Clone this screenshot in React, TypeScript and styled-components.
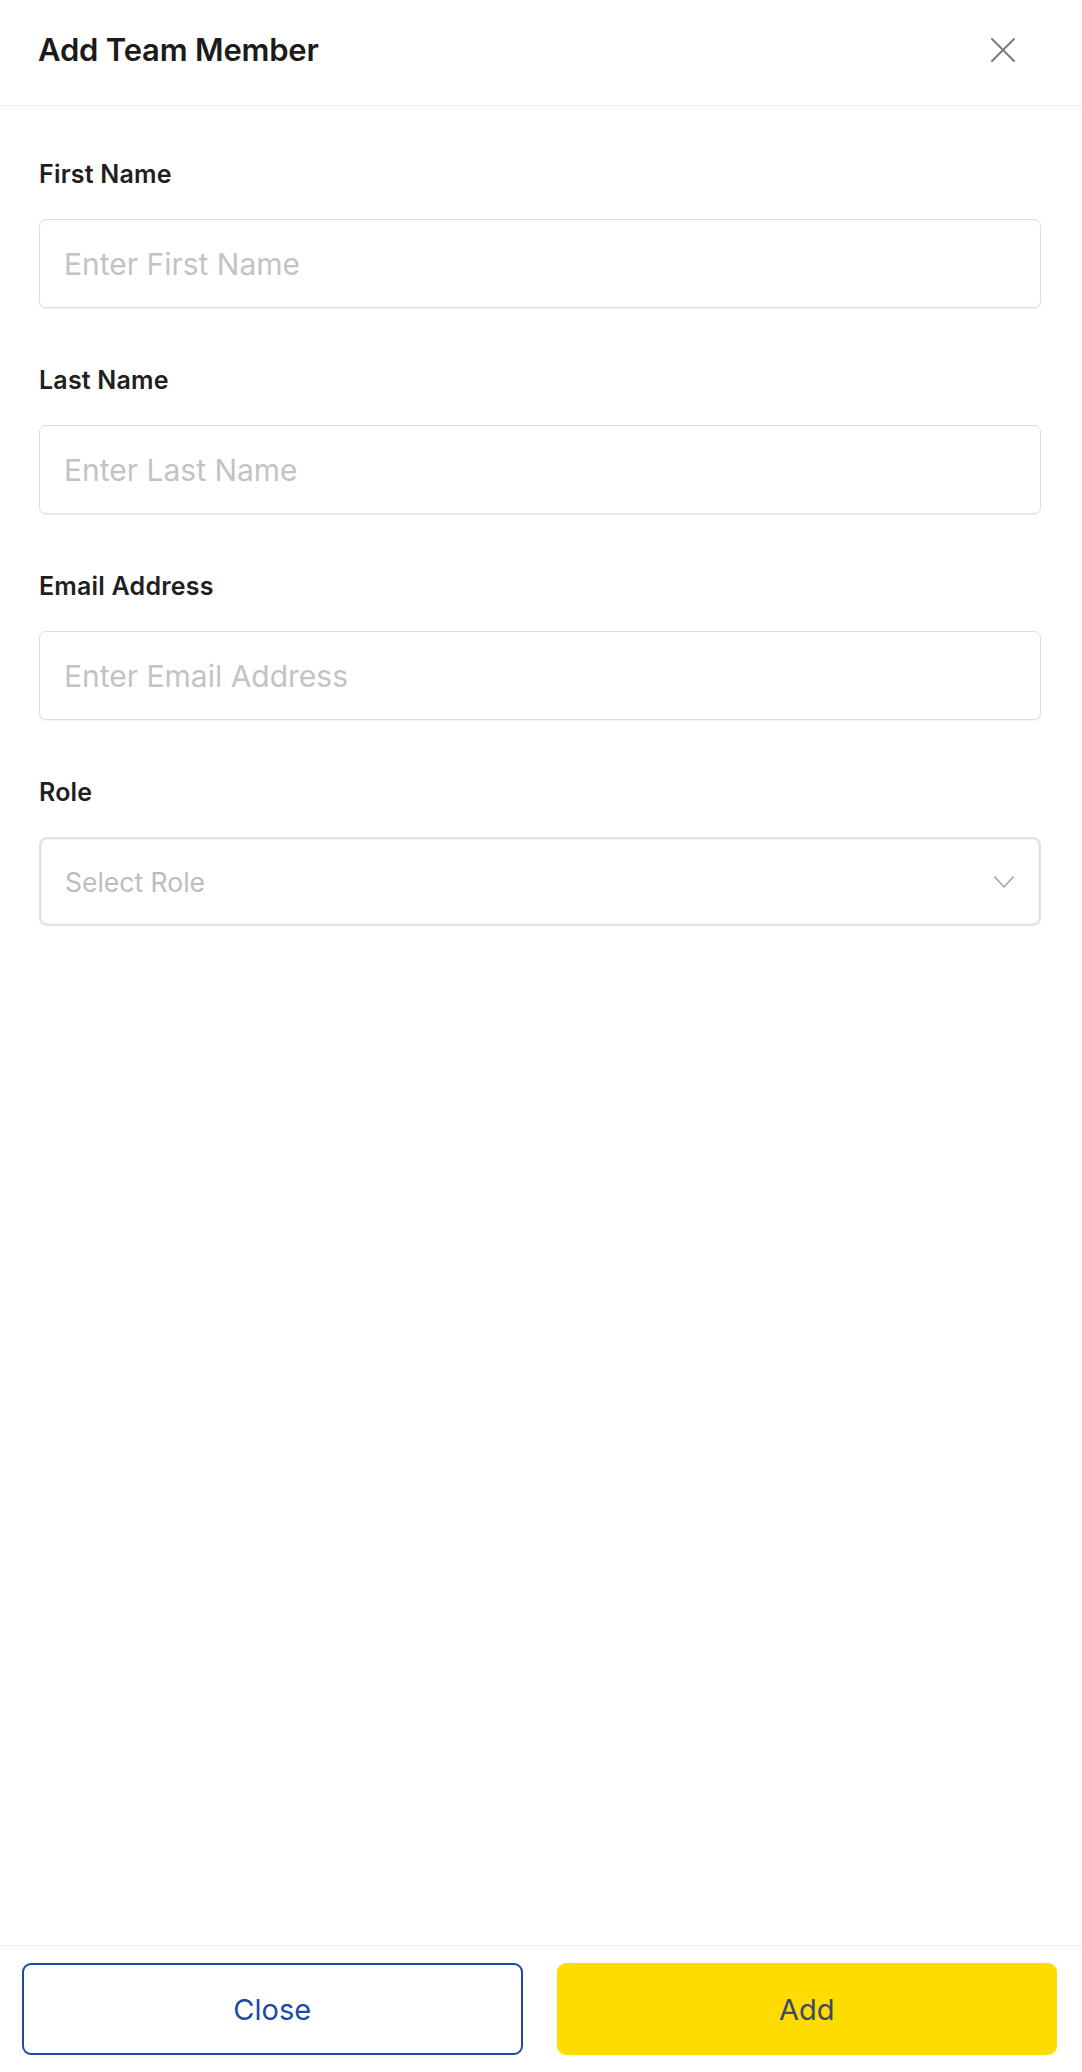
import React from 'react'
import styled, { createGlobalStyle } from 'styled-components'

const GlobalStyle = createGlobalStyle`
  * { box-sizing: border-box; }
  html, body {
    margin: 0;
    padding: 0;
    background: #ffffff;
    font-family: Inter, "Liberation Sans", Arial, sans-serif;
  }
`

const fields = [
  { label: 'First Name', placeholder: 'Enter First Name' },
  { label: 'Last Name', placeholder: 'Enter Last Name' },
  { label: 'Email Address', placeholder: 'Enter Email Address' },
]

const App = () => {
  return (
    <>
      <GlobalStyle />
      <StModal>
        {/* // Header */}
        <StHeader>
          <StTitle>Add Team Member</StTitle>
          <StIconButton aria-label="Close">
            <svg width="26" height="26" viewBox="0 0 26 26" fill="none">
              <path d="M2 2L24 24M24 2L2 24" stroke="#7c7c7c" strokeWidth="2" strokeLinecap="round" />
            </svg>
          </StIconButton>
        </StHeader>

        {/* // Form */}
        <StBody>
          {fields.map((el) => (
            <StField key={el.label}>
              <StLabel>{el.label}</StLabel>
              <StInput placeholder={el.placeholder} />
            </StField>
          ))}
          <StField>
            <StLabel>Role</StLabel>
            <StSelect>
              <StSelectText>Select Role</StSelectText>
              <svg width="22" height="14" viewBox="0 0 22 14" fill="none">
                <path d="M1.5 1.5L11 12L20.5 1.5" stroke="#a3a3a3" strokeWidth="1.6" strokeLinejoin="round" />
              </svg>
            </StSelect>
          </StField>
        </StBody>

        {/* // Footer */}
        <StFooter>
          <StButton>Close</StButton>
          <StButton primary>Add</StButton>
        </StFooter>
      </StModal>
    </>
  )
}

// Wrapper
const StModal = styled.div`
  display: flex;
  flex-direction: column;
  min-height: 100vh;
  background: #ffffff;
`

// Header
const StHeader = styled.div`
  display: flex;
  align-items: center;
  justify-content: space-between;
  height: 106px;
  padding: 0 66px 6px 38px;
  border-bottom: 1px solid #ececec;
`
const StTitle = styled.h1`
  margin: 0;
  font-size: 31px;
  font-weight: 600;
  color: #1b1b1b;
  letter-spacing: -0.2px;
`
const StIconButton = styled.button`
  display: flex;
  align-items: center;
  justify-content: center;
  width: 26px;
  height: 26px;
  padding: 0;
  border: none;
  background: none;
  cursor: pointer;
`

// Form
const StBody = styled.div`
  flex: 1;
  display: flex;
  flex-direction: column;
  gap: 57px;
  padding: 53px 41px 0 39px;
`
const StField = styled.div`
  display: flex;
  flex-direction: column;
`
const StLabel = styled.label`
  font-size: 25px;
  line-height: 30px;
  font-weight: 600;
  letter-spacing: 0.2px;
  color: #1f1f1f;
  margin-bottom: 30px;
`
const StInput = styled.input`
  width: 100%;
  height: 89px;
  padding: 0 24px;
  border: 1px solid #dedede;
  border-radius: 7px;
  box-shadow: 0 1px 2px rgba(0, 0, 0, 0.06);
  font-family: inherit;
  font-size: 30px;
  color: #1f1f1f;
  outline: none;

  &::placeholder {
    color: #c3c3c3;
  }
`
const StSelect = styled.div`
  display: flex;
  align-items: center;
  justify-content: space-between;
  height: 89px;
  padding: 0 24px 0 24px;
  border: 2px solid #e2e2e2;
  border-radius: 8px;
  box-shadow: inset 0 0 0 1px #f2f2f2;
`
const StSelectText = styled.span`
  font-size: 26.5px;
  color: #bdbdbd;
`

// Footer
const StFooter = styled.div`
  display: grid;
  grid-template-columns: 1fr 1fr;
  gap: 34px;
  padding: 17px 25px 17px 22px;
  border-top: 1px solid #ececec;
`
const StButton = styled.button<{ primary?: boolean }>`
  height: 92px;
  border-radius: 9px;
  font-family: inherit;
  font-size: 29px;
  cursor: pointer;
  border: 2px solid ${(props) => (props.primary ? '#ffdc00' : '#1b4aa2')};
  background: ${(props) => (props.primary ? '#ffdc00' : '#ffffff')};
  color: ${(props) => (props.primary ? '#3e4868' : '#1b4aa2')};
`

export default App
